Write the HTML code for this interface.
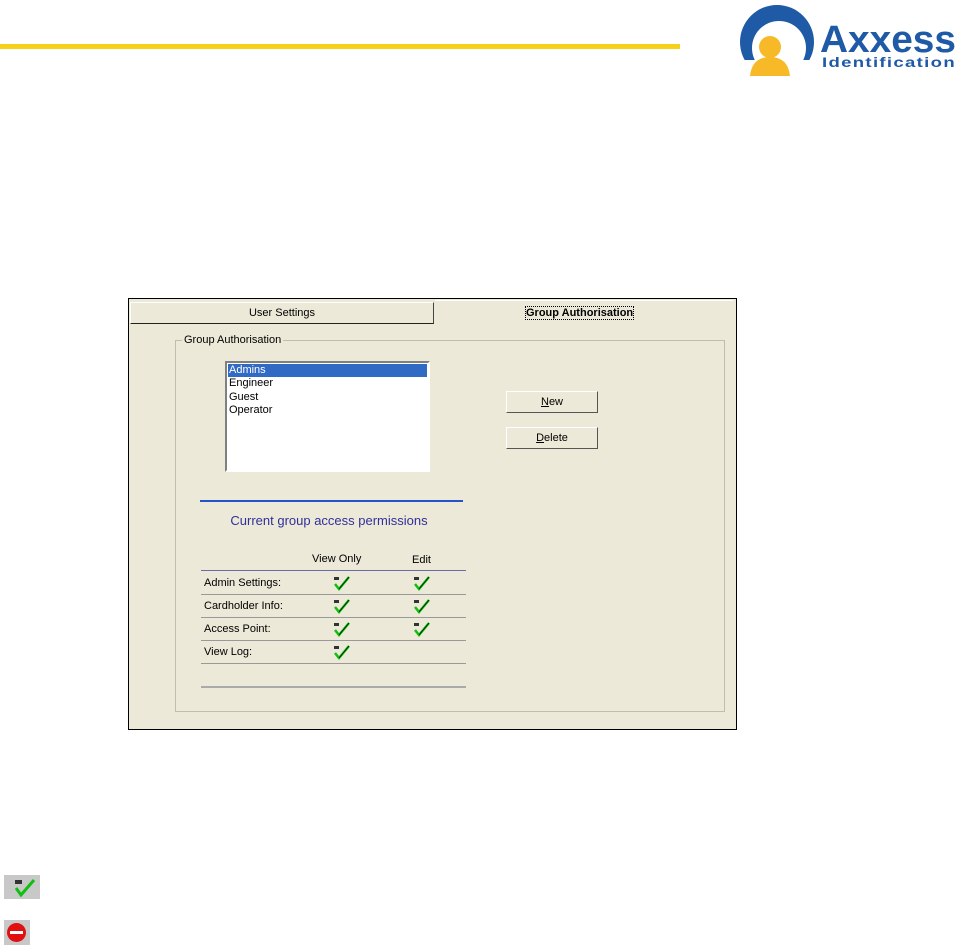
<!DOCTYPE html>
<html><head><style>
body{margin:0;width:959px;height:947px;background:#fff;position:relative;overflow:hidden;font-family:"Liberation Sans",sans-serif;}
.a{position:absolute}
.t{font-size:11px;color:#000}
.chk{position:absolute;width:18px;height:16px}
</style></head><body>
<div class="a" style="left:0;top:44px;width:680px;height:5px;background:#f7d117"></div>
<svg class="a" style="left:736px;top:0" width="223" height="78" viewBox="0 0 223 78">
<defs><clipPath id="cp"><rect x="0" y="0" width="80" height="60"/></clipPath></defs>
<path clip-path="url(#cp)" fill-rule="evenodd" fill="#1f5aa6" d="M4 42 A37 37 0 1 1 78 42 A37 37 0 1 1 4 42 Z M16 48 A27 27 0 1 1 70 48 A27 27 0 1 1 16 48 Z"/>
<circle cx="34" cy="47" r="11" fill="#f7b928"/>
<path d="M14 76 Q16 57 34 57 Q52 57 54 76 Z" fill="#f7b928"/>
<text x="84" y="52" font-family="Liberation Sans" font-weight="bold" font-size="38" fill="#1f5aa6" textLength="136" lengthAdjust="spacingAndGlyphs">Axxess</text>
<text x="86" y="67" font-family="Liberation Sans" font-weight="bold" font-size="14" fill="#1f5aa6" textLength="134" lengthAdjust="spacingAndGlyphs" letter-spacing="1">Identification</text>
</svg>
<div class="a" style="left:128px;top:298px;width:607px;height:430px;border:1px solid #000;background:#ece9d8"></div>
<div class="a" style="left:130px;top:302px;width:302px;height:20px;border:1px solid;border-color:#fff #444 #222 #fff;background:#ece9d8"></div>
<div class="a" style="left:435px;top:300px;width:298px;height:1px;background:#fff"></div>
<div class="a t" style="left:130px;top:307px;width:304px;text-align:center">User Settings</div>
<div class="a t" style="left:526px;top:307px;font-weight:bold;outline:1px dotted #000">Group Authorisation</div>
<div class="a" style="left:175px;top:340px;width:548px;height:370px;border:1px solid #c0bdb0"></div>
<div class="a t" style="left:182px;top:334px;background:#ece9d8;padding:0 2px">Group Authorisation</div>
<div class="a" style="left:225px;top:361px;width:201px;height:107px;background:#fff;border:2px solid;border-color:#808080 #fff #fff #808080"></div>
<div class="a" style="left:228px;top:364px;width:199px;height:13px;background:#316ac5"></div>
<div class="a t" style="left:229px;top:364px;color:#fff;line-height:13.5px">Admins</div>
<div class="a t" style="left:229px;top:377px;line-height:13.5px">Engineer<br>Guest<br>Operator</div>
<div class="a t" style="left:506px;top:391px;width:90px;height:20px;border:1px solid;border-color:#fff #555 #555 #fff;text-align:center;line-height:20px"><u>N</u>ew</div>
<div class="a t" style="left:506px;top:427px;width:90px;height:20px;border:1px solid;border-color:#fff #555 #555 #fff;text-align:center;line-height:20px"><u>D</u>elete</div>
<div class="a" style="left:200px;top:500px;width:263px;height:2px;background:#2355c8"></div>
<div class="a" style="left:200px;top:513px;width:258px;text-align:center;font-size:13px;color:#30309a">Current group access permissions</div>
<div class="a t" style="left:312px;top:553px">View Only</div>
<div class="a t" style="left:412px;top:554px">Edit</div>
<div class="a" style="left:201px;top:570px;width:265px;height:1px;background:#6a6aa8"></div>
<div class="a t" style="left:204px;top:577px">Admin Settings:</div>
<div class="a t" style="left:204px;top:600px">Cardholder Info:</div>
<div class="a t" style="left:204px;top:623px">Access Point:</div>
<div class="a t" style="left:204px;top:646px">View Log:</div>
<div class="a" style="left:201px;top:594px;width:265px;height:1px;background:#999"></div>
<div class="a" style="left:201px;top:617px;width:265px;height:1px;background:#999"></div>
<div class="a" style="left:201px;top:640px;width:265px;height:1px;background:#999"></div>
<div class="a" style="left:201px;top:663px;width:265px;height:1px;background:#999"></div>
<div class="a" style="left:201px;top:686px;width:265px;height:2px;background:#aaa"></div>
<svg width="0" height="0" style="position:absolute"><defs><g id="c"><rect x="1" y="2" width="5" height="3" fill="#333"/><path d="M2 9 L6 14 L16 2" stroke="#10c010" stroke-width="2.5" fill="none"/><path d="M6 14 L16 2" stroke="#000" stroke-width="0.7" fill="none"/></g></defs></svg>
<svg class="chk" style="left:333px;top:575px"><use href="#c"/></svg>
<svg class="chk" style="left:413px;top:575px"><use href="#c"/></svg>
<svg class="chk" style="left:333px;top:598px"><use href="#c"/></svg>
<svg class="chk" style="left:413px;top:598px"><use href="#c"/></svg>
<svg class="chk" style="left:333px;top:621px"><use href="#c"/></svg>
<svg class="chk" style="left:413px;top:621px"><use href="#c"/></svg>
<svg class="chk" style="left:333px;top:644px"><use href="#c"/></svg>
<div class="a" style="left:4px;top:875px;width:36px;height:24px;background:#c8c8c8"></div>
<svg class="a" style="left:13px;top:878px" width="24" height="20"><rect x="2" y="2" width="7" height="4" fill="#333"/><path d="M3 10 L8 17 L21 2" stroke="#10c010" stroke-width="3" fill="none"/></svg>
<div class="a" style="left:4px;top:920px;width:26px;height:25px;background:#c8c8c8"></div>
<div class="a" style="left:7px;top:923px;width:19px;height:19px;border-radius:50%;background:#e01010"></div>
<div class="a" style="left:10px;top:931px;width:13px;height:3px;background:#fff"></div>
</body></html>
